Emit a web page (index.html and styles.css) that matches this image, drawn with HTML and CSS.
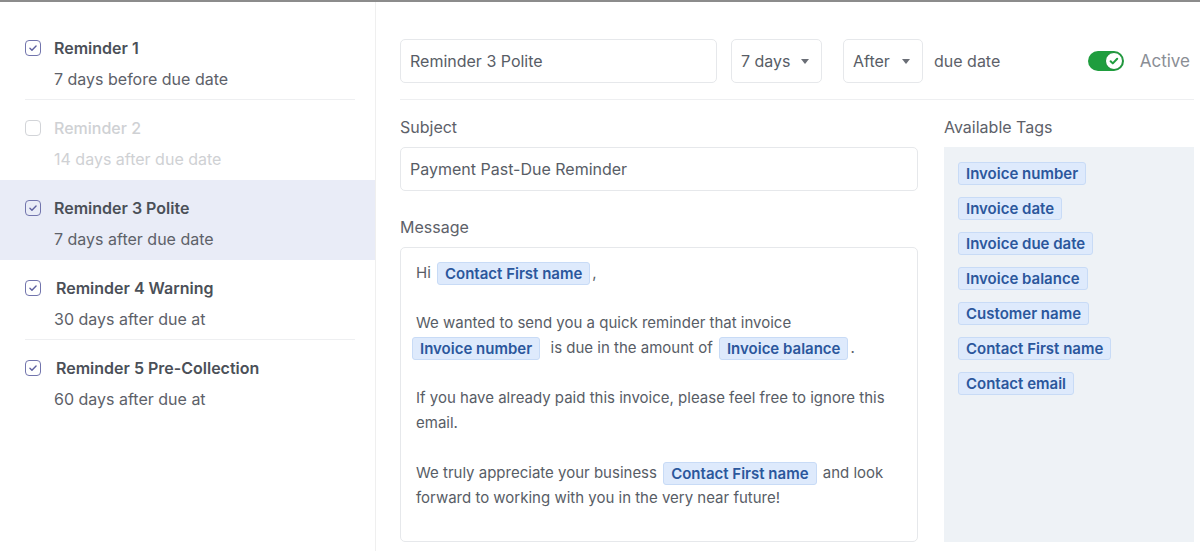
FILE: index.html
```html
<!DOCTYPE html>
<html>
<head>
<meta charset="utf-8">
<link rel="stylesheet" href="styles.css">
</head>
<body>
<div class="app">
  <aside class="sidebar">
    <div class="item">
      <div class="item-body sep">
        <div class="item-head"><span class="cb on"><svg viewBox="0 0 16 16"><path d="M4.5 8.3l2.3 2.3 4.7-5"/></svg></span><span class="title">Reminder 1</span></div>
        <div class="sub">7 days before due date</div>
      </div>
    </div>
    <div class="item disabled">
      <div class="item-body">
        <div class="item-head"><span class="cb"></span><span class="title">Reminder 2</span></div>
        <div class="sub">14 days after due date</div>
      </div>
    </div>
    <div class="item selected">
      <div class="item-body">
        <div class="item-head"><span class="cb on"><svg viewBox="0 0 16 16"><path d="M4.5 8.3l2.3 2.3 4.7-5"/></svg></span><span class="title">Reminder 3 Polite</span></div>
        <div class="sub">7 days after due date</div>
      </div>
    </div>
    <div class="item">
      <div class="item-body sep">
        <div class="item-head"><span class="cb on"><svg viewBox="0 0 16 16"><path d="M4.5 8.3l2.3 2.3 4.7-5"/></svg></span><span class="title t2">Reminder 4 Warning</span></div>
        <div class="sub">30 days after due at</div>
      </div>
    </div>
    <div class="item">
      <div class="item-body">
        <div class="item-head"><span class="cb on"><svg viewBox="0 0 16 16"><path d="M4.5 8.3l2.3 2.3 4.7-5"/></svg></span><span class="title t2">Reminder 5 Pre-Collection</span></div>
        <div class="sub">60 days after due at</div>
      </div>
    </div>
  </aside>
  <main class="main">
    <div class="toprow">
      <div class="field name">Reminder 3 Polite</div>
      <div class="field select s1">7 days<span class="caret"></span></div>
      <div class="field select s2">After<span class="caret"></span></div>
      <span class="plain">due date</span>
      <div class="status">
        <span class="toggle"><span class="knob"><svg viewBox="0 0 16 16"><path d="M4.6 8.2l2.2 2.2 4.4-4.6"/></svg></span></span>
        <span class="active-label">Active</span>
      </div>
    </div>
    <div class="columns">
      <div class="left">
        <div class="label">Subject</div>
        <div class="field subject">Payment Past-Due Reminder</div>
        <div class="label msg-label">Message</div>
        <div class="message">
          <p>Hi <span class="tag">Contact First name</span>,</p>
          <p>We wanted to send you a quick reminder that invoice<br><span class="tag first">Invoice number</span>&nbsp; is due in the amount of <span class="tag">Invoice balance</span>.</p>
          <p>If you have already paid this invoice, please feel free to ignore this email.</p>
          <p>We truly appreciate your business <span class="tag">Contact First name</span> and look forward to working with you in the very near future!</p>
        </div>
      </div>
      <div class="right">
        <div class="label">Available Tags</div>
        <div class="tags">
          <span class="tag">Invoice number</span>
          <span class="tag">Invoice date</span>
          <span class="tag">Invoice due date</span>
          <span class="tag">Invoice balance</span>
          <span class="tag">Customer name</span>
          <span class="tag">Contact First name</span>
          <span class="tag">Contact email</span>
        </div>
      </div>
    </div>
  </main>
</div>
</body>
</html>
```

FILE: styles.css
```css
* { box-sizing: border-box; }
html, body { margin: 0; padding: 0; }
body {
  font-family: Inter, "Noto Sans", "Liberation Sans", sans-serif;
  color: #585d66;
  background: #fff;
  border-top: 2px solid #8c8c8c;
  height: 551px;
  overflow: hidden;
}
.app {
  display: flex;
  height: 549px;
}
.sidebar {
  width: 376px;
  flex: none;
  border-right: 1px solid #efefef;
  padding-top: 18px;
}
.item {
  padding-left: 25px;
}
.item.selected { background: #e9ecf7; }
.item-body {
  padding: 18px 0 10px;
  margin-right: 20px;
  border-bottom: 1px solid transparent;
  height: 80px;
}
.item-body.sep { border-bottom-color: #eeeff1; }
.item-head {
  display: flex;
  align-items: center;
  gap: 13px;
  height: 20px;
}
.cb {
  width: 16px;
  height: 16px;
  border: 1.5px solid #d2d4d8;
  border-radius: 4px;
  flex: none;
  display: flex;
}
.cb.on { border-color: #7275ad; }
.cb svg { width: 100%; height: 100%; }
.cb path { fill: none; stroke: #5e61a0; stroke-width: 1.6; stroke-linecap: round; stroke-linejoin: round; }
.title {
  font-size: 16px;
  font-weight: 600;
  color: #4b5058;
  line-height: 20px;
}
.title.t2 { margin-left: 2px; }
.sub {
  margin-top: 11px;
  padding-left: 29px;
  font-size: 16px;
  line-height: 20px;
  color: #5d6169;
}
.disabled .title, .disabled .sub { color: #cfd1d4; font-weight: 400; }
.disabled .title { font-weight: 500; }

.main {
  flex: 1;
  padding: 37px 6px 0 24px;
  min-width: 0;
}
.toprow {
  display: flex;
  align-items: center;
  height: 44px;
}
.field {
  height: 44px;
  border: 1px solid #e6e8eb;
  border-radius: 5px;
  display: flex;
  align-items: center;
  padding: 0 9px;
  font-size: 16px;
  color: #585d66;
}
.name { width: 317px; }
.select { justify-content: space-between; padding-right: 12px; }
.s1 { width: 91px; margin-left: 14px; }
.s2 { width: 80px; margin-left: 21px; }
.caret {
  width: 0; height: 0;
  border-left: 4.5px solid transparent;
  border-right: 4.5px solid transparent;
  border-top: 5px solid #6a6e76;
}
.plain { margin-left: 11px; font-size: 16px; color: #5d6169; }
.status {
  margin-left: auto;
  display: flex;
  align-items: center;
  gap: 15px;
  padding-right: 4px;
}
.toggle {
  width: 36px;
  height: 20px;
  border-radius: 10px;
  background: #1f9d3e;
  display: flex;
  align-items: center;
  justify-content: flex-end;
  padding-right: 1px;
  margin-right: 1px;
}
.knob {
  width: 18px;
  height: 18px;
  border-radius: 50%;
  background: #fff;
  border: 1px solid #1a8a36;
  display: flex;
}
.knob svg { width: 100%; height: 100%; }
.knob path { fill: none; stroke: #1f9d3e; stroke-width: 2; stroke-linecap: round; stroke-linejoin: round; }
.active-label { font-size: 17px; color: #8a8e95; }

.columns {
  display: flex;
  gap: 26px;
  border-top: 1px solid #eeeff1;
  margin-top: 16px;
  padding-top: 17px;
}
.left { width: 518px; flex: none; }
.right { flex: 1; }
.label {
  font-size: 16px;
  line-height: 20px;
  color: #5d6169;
  margin-bottom: 10px;
}
.subject { width: 100%; }
.msg-label { margin-top: 26px; }
.message {
  border: 1px solid #e6e8eb;
  border-radius: 5px;
  height: 295px;
  padding: 12px 15px;
  font-size: 15px;
  line-height: 25px;
  color: #585d66;
}
.message p { margin: 0 0 25px; }
.tag {
  display: inline-block;
  line-height: 21px;
  padding: 0 7px;
  background: #deeafc;
  border: 1px solid #c8dbf6;
  border-radius: 3px;
  color: #2b579c;
  font-weight: 600;
  font-size: 15px;
}
.message .tag { margin: 0 2px; vertical-align: -1px; }
.message .tag.first { margin-left: -4px; }
.tags {
  background: #eef2f6;
  height: 395px;
  padding: 15px 14px;
  display: flex;
  flex-direction: column;
  align-items: flex-start;
  gap: 12px;
}
```
